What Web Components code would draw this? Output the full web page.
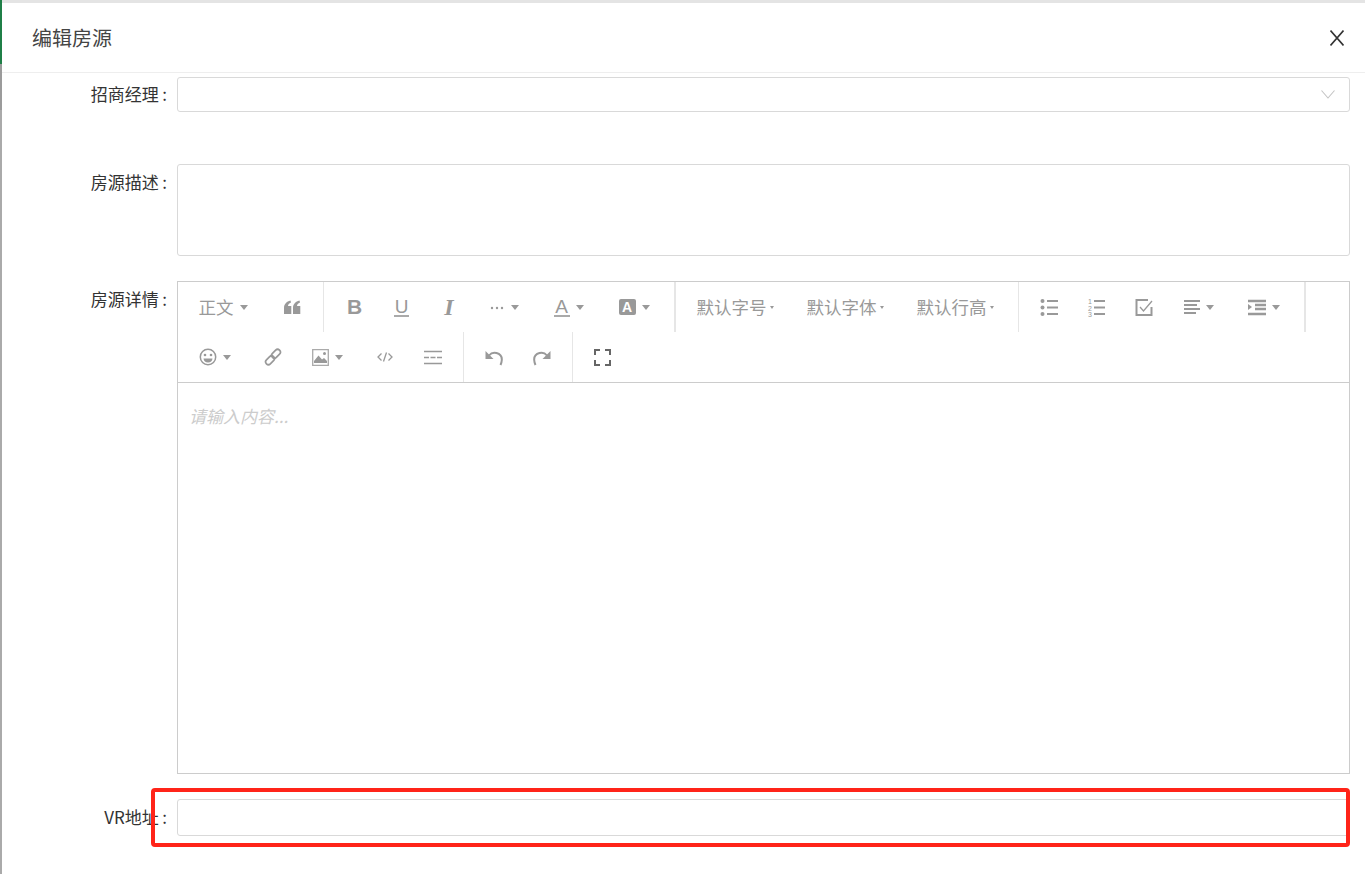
<!DOCTYPE html>
<html lang="zh-CN">
<head>
<meta charset="utf-8">
<title>编辑房源</title>
<style>
html, body { margin: 0; height: 100%; background: #fff; overflow: hidden; }
body { font-family: "Noto Sans CJK SC", "Liberation Sans", sans-serif; }
</style>
</head>
<body>
<edit-dialog title-text="编辑房源">
    <form-row label="招商经理" style="--label-height:34px"><select-box></select-box></form-row>
    <form-row label="房源描述" style="margin-top:52px"><text-box height="92"></text-box></form-row>
    <form-row label="房源详情" style="margin-top:25px"><rich-editor placeholder="请输入内容..."></rich-editor></form-row>
    <form-row label="VR地址" style="margin-top:25px"><text-box height="37"></text-box></form-row>
</edit-dialog>
<mark-box></mark-box>

<script>
const caretBig = '<i class="caret"></i>';
const caretSmall = '<i class="caret small"></i>';

function svg(inner, w = 18, h = 18) {
    return `<svg width="${w}" height="${h}" viewBox="0 0 ${w} ${h}" fill="none" stroke="#999" stroke-width="1.5">${inner}</svg>`;
}

const icons = {
    quote: svg('<path stroke="none" fill="#999" d="M1 16V10C1 6 3.500 3.500 7.500 2.500L8 4.500C6 5.200 5 6.500 5 8H8.300V16ZM10 16V10C10 6 12.500 3.500 16.500 2.500L17 4.500C15 5.200 14 6.500 14 8H17.300V16Z"/>'),
    dots: svg('<g stroke="none" fill="#999"><circle cx="3" cy="10" r="1.200"/><circle cx="8" cy="10" r="1.200"/><circle cx="13" cy="10" r="1.200"/></g>', 16, 18),
    ul: svg('<g stroke="none" fill="#999"><circle cx="2.500" cy="3" r="2"/><circle cx="2.500" cy="9.500" r="2"/><circle cx="2.500" cy="16" r="2"/></g><path stroke-width="2" d="M7 3H18M7 9.500H18M7 16H18"/>', 18, 19),
    ol: svg('<g stroke="none" fill="#999" font-family="Liberation Sans, sans-serif" font-size="7"><text x="1" y="6">1</text><text x="1" y="12.500">2</text><text x="1" y="19">3</text></g><path stroke-width="2" d="M7 3H18M7 9.500H18M7 16H18"/>', 18, 19),
    check: svg('<path stroke-width="2" d="M16.500 9V17H1.500V2H13"/><path stroke-width="1.300" d="M5 9L8.500 13L17 3"/>', 18, 18),
    align: svg('<path stroke-width="1.800" d="M0 2H16M0 6H13M0 10H16M0 14H12"/>', 16, 16),
    indent: svg('<path stroke-width="2.400" d="M0 2H18M7 6H18M7 10H18M0 15H18"/>' + '<path stroke="none" fill="#999" d="M0 5V11L4 8Z"/>', 18, 17),
    emoji: svg('<circle cx="9" cy="9" r="7.700"/><circle stroke="none" fill="#999" cx="6" cy="7" r="1.300"/><circle stroke="none" fill="#999" cx="12" cy="7" r="1.300"/><path stroke="none" fill="#999" d="M4.500 10.500H13.500C13.300 13 11.500 14.500 9 14.500S4.700 13 4.500 10.500Z"/>'),
    link: svg('<g stroke-width="1.700"><rect x="1" y="9.500" width="10" height="5.500" rx="2.750" transform="rotate(-45 6 12.250)"/><rect x="7" y="3" width="10" height="5.500" rx="2.750" transform="rotate(-45 12 5.750)"/></g>'),
    image: svg('<path stroke-width="1.300" stroke="#aaa" d="M.7 .7H16.300V16.300H.7Z"/><path stroke="none" fill="#999" d="M2 14V12L6.500 6.500L10 10.500L12 9L15 12V14Z"/><circle stroke="none" fill="#999" cx="12.500" cy="4.500" r="1.500"/>', 17, 17),
    code: svg('<path stroke-width="1.300" d="M4.500 4.500L1 8L4.500 11.500M11.500 4.500L15 8L11.500 11.500M9.500 3.500L6.500 12.500"/>', 16, 16),
    hr: svg('<path stroke-width="1.600" d="M0 1.500H18M0 13.500H18"/><path stroke-width="1.300" d="M0 7.500H5M6.500 7.500H11.500M13 7.500H18"/>', 18, 15),
    undo: svg('<path stroke-width="2" d="M4 6.500C6 4 9 3.300 11.500 4C15 5 17 8 16.800 11C16.700 13 16.200 14.500 15.500 16"/><path stroke="none" fill="#999" d="M.5 2V10H8.500Z"/>', 18, 17),
    redo: svg('<path stroke-width="2" d="M14 6.500C12 4 9 3.300 6.500 4C3 5 1 8 1.200 11C1.300 13 1.800 14.500 2.500 16"/><path stroke="none" fill="#999" d="M17.500 2V10H9.500Z"/>', 18, 17),
    full: svg('<path stroke="#666" stroke-width="2" d="M1 6V1H6M11 1H16V6M16 11V16H11M6 16H1V11"/>', 17, 17)
};

// one row of the toolbar is cut by flex-wrap, like the real editor
const toolbarGroups = [
    { width: 146, items: [
        { w: 90, html: '<span class="word">正文</span>' + caretBig },
        { w: 47, html: icons.quote }
    ] },
    { width: 352, pad: 7, heavy: true, items: [
        { w: 47, html: '<b class="glyph bold">B</b>' },
        { w: 47, html: '<span class="glyph under">U</span>' },
        { w: 48, html: '<b class="glyph ital">I</b>' },
        { w: 62, html: icons.dots + caretBig },
        { w: 67, html: '<span class="glyph under wide">A</span>' + caretBig },
        { w: 64, html: '<span class="glyph filled">A</span>' + caretBig }
    ] },
    { width: 343, items: [
        { w: 120, html: '<span class="word tight">默认字号</span>' + caretSmall },
        { w: 100, html: '<span class="word tight">默认字体</span>' + caretSmall },
        { w: 120, html: '<span class="word tight">默认行高</span>' + caretSmall }
    ] },
    { width: 287, pad: 6, heavy: true, items: [
        { w: 47, html: icons.ul },
        { w: 48, html: icons.ol },
        { w: 48, html: icons.check },
        { w: 62, html: icons.align + caretBig },
        { w: 67, html: icons.indent + caretBig }
    ] },
    { width: 286, items: [
        { w: 74, html: icons.emoji + caretBig },
        { w: 41, html: icons.link },
        { w: 68, html: icons.image + caretBig },
        { w: 48, html: icons.code },
        { w: 47, html: icons.hr }
    ] },
    { width: 109, pad: 6, items: [
        { w: 48, html: icons.undo },
        { w: 47, html: icons.redo }
    ] },
    { width: 60, pad: 5, bare: true, items: [
        { w: 48, html: icons.full }
    ] }
];

class EditDialog extends HTMLElement {
    connectedCallback() {
        this.attachShadow({ mode: "open" });
        this.shadowRoot.innerHTML = `
        <style>
        :host {
          display: flex;
          height: 874px;
          box-sizing: border-box;
        }
        .backdrop {
          width: 2px;
          flex: none;
          background: linear-gradient(#1f7f47 0, #1f7f47 64px, #9b9b9b 64px, #9b9b9b 110px, #aaa 110px);
        }
        .panel {
          flex: 1;
          min-width: 0;
        }
        header {
          height: 70px;
          margin-top: 3px;
          box-sizing: border-box;
          display: flex;
          align-items: center;
          justify-content: space-between;
          padding: 0 21px 0 30px;
          border-bottom: 1px solid #eee;
          color: #444;
          font-size: 20px;
        }
        .top {
          height: 3px;
          background: #e4e4e4;
          margin-bottom: -3px;
        }
        .close {
          display: block;
        }
        main {
          padding-top: 4px;
          padding-right: 15px;
        }
        </style>
        <div class="backdrop"></div>
        <div class="panel">
          <div class="top"></div>
          <header>
            <span id="title"></span>
            <svg class="close" width="14" height="16" viewBox="0 0 14 16" stroke="#333" stroke-width="1.600"><path d="M.5 .5L13.500 15.500M13.500 .5L.5 15.500"/></svg>
          </header>
          <main><slot></slot></main>
        </div>`;
        this.shadowRoot.querySelector("#title").textContent = this.getAttribute("title-text");
    }
}

class FormRow extends HTMLElement {
    connectedCallback() {
        this.attachShadow({ mode: "open" });
        this.shadowRoot.innerHTML = `
        <style>
        :host {
          display: flex;
        }
        .label {
          width: 165px;
          flex: none;
          box-sizing: border-box;
          text-align: right;
          font-size: 17px;
          line-height: var(--label-height, 36px);
          color: #333;
          white-space: nowrap;
        }
        .colon {
          margin-left: 3.500px;
        }
        .control {
          margin-left: 10px;
          flex: 1;
          min-width: 0;
        }
        </style>
        <div class="label"><span id="text"></span><span class="colon">:</span></div>
        <div class="control"><slot></slot></div>`;
        this.shadowRoot.querySelector("#text").textContent = this.getAttribute("label");
    }
}

class SelectBox extends HTMLElement {
    connectedCallback() {
        this.attachShadow({ mode: "open" });
        this.shadowRoot.innerHTML = `
        <style>
        :host {
          display: flex;
          height: 35px;
          box-sizing: border-box;
          align-items: center;
          justify-content: flex-end;
          padding-right: 14px;
          border: 1px solid #d9d9d9;
          border-radius: 3px;
          background: #fff;
        }
        </style>
        <svg width="14" height="9" viewBox="0 0 14 9" fill="none" stroke="#c4c4c4" stroke-width="1.100"><path d="M.5 .5L7 8L13.500 .5"/></svg>`;
    }
}

class TextBox extends HTMLElement {
    connectedCallback() {
        this.attachShadow({ mode: "open" });
        this.shadowRoot.innerHTML = `
        <style>
        :host {
          display: block;
          box-sizing: border-box;
          height: ${this.getAttribute("height")}px;
          border: 1px solid #d9d9d9;
          border-radius: 3px;
          background: #fff;
        }
        </style>`;
    }
}

class RichEditor extends HTMLElement {
    connectedCallback() {
        this.attachShadow({ mode: "open" });
        const groups = toolbarGroups.map(g => {
            const items = g.items.map(it => `<span class="item" style="width:${it.w}px">${it.html}</span>`).join("");
            const cls = "group" + (g.heavy ? " heavy" : "") + (g.bare ? " bare" : "");
            return `<div class="${cls}" style="width:${g.width}px;padding-left:${g.pad || 0}px">${items}</div>`;
        }).join("");
        this.shadowRoot.innerHTML = `
        <style>
        :host {
          display: block;
          height: 493px;
          box-sizing: border-box;
          border: 1px solid #ccc;
          background: #fff;
        }
        .toolbar {
          display: flex;
          flex-wrap: wrap;
          height: 101px;
          box-sizing: border-box;
          border-bottom: 1px solid #ccc;
          align-content: flex-start;
        }
        .group {
          display: flex;
          height: 50px;
          box-sizing: border-box;
          border-right: 1px solid #e6e6e6;
        }
        .group.heavy {
          border-right-width: 2px;
        }
        .group.bare {
          border-right: 0;
        }
        .item {
          display: flex;
          flex: none;
          align-items: center;
          justify-content: center;
          gap: 4px;
          color: #999;
          height: 50px;
        }
        .word {
          font-size: 17.500px;
          color: #999;
          margin-top: -2px;
        }
        .word.tight {
          margin-left: -2px;
        }
        .caret {
          width: 0;
          height: 0;
          border: 4px solid transparent;
          border-top: 5px solid #999;
          border-bottom: 0;
          margin-left: 2px;
        }
        .caret.small {
          border-width: 3px 2px 0;
          border-top-color: #999;
          margin-left: -1px;
        }
        .glyph {
          font-family: "Liberation Sans", sans-serif;
          font-size: 21px;
          line-height: 20px;
          color: #999;
        }
        .bold {
          font-weight: bold;
        }
        .under {
          border-bottom: 2px solid #aaa;
          line-height: 17px;
          font-size: 19px;
          padding: 0 1px;
        }
        .under.wide {
          padding: 0;
          min-width: 16px;
          text-align: center;
        }
        .ital {
          font-family: "Liberation Serif", serif;
          font-style: italic;
          font-size: 24px;
        }
        .filled {
          display: inline-flex;
          justify-content: center;
          width: 17px;
          height: 16px;
          line-height: 16px;
          font-size: 14px;
          font-weight: bold;
          color: #fff;
          background: #999;
          border-radius: 2px;
        }
        .content {
          padding: 21px 11px;
          font-size: 17px;
          line-height: 24px;
          font-style: italic;
          color: #ccc;
        }
        </style>
        <div class="toolbar">${groups}</div>
        <div class="content">${this.getAttribute("placeholder")}</div>`;
    }
}

// the red rectangle somebody drew over the screenshot
class MarkBox extends HTMLElement {
    connectedCallback() {
        this.attachShadow({ mode: "open" });
        this.shadowRoot.innerHTML = `
        <style>
        :host {
          position: absolute;
          left: 151px;
          top: 788px;
          width: 1199px;
          height: 59px;
          box-sizing: border-box;
          border: 4px solid #ff2419;
          border-radius: 4px;
          pointer-events: none;
        }
        </style>`;
    }
}

customElements.define("edit-dialog", EditDialog);
customElements.define("form-row", FormRow);
customElements.define("select-box", SelectBox);
customElements.define("text-box", TextBox);
customElements.define("rich-editor", RichEditor);
customElements.define("mark-box", MarkBox);
</script>
</body>
</html>
